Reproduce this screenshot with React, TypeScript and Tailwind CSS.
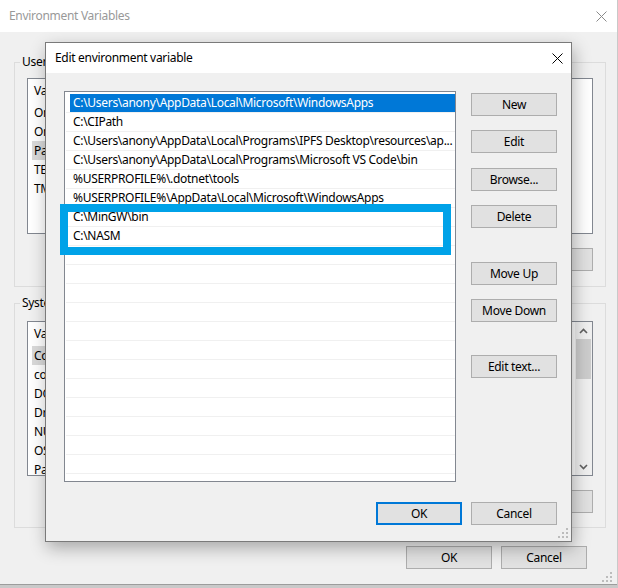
import React from "react";

const font = "font-['Noto_Sans',sans-serif] tracking-[-0.3px]";

function WinButton({ label, primary = false, className = "" }: { label: string; primary?: boolean; className?: string }) {
  return (
    <div
      className={`flex h-[23px] w-[86px] shrink-0 items-center justify-center bg-[#e1e1e1] text-[12px] text-black ${
        primary ? "border-2 border-[#0078d7]" : "border border-[#adadad]"
      } ${className}`}
    >
      {label}
    </div>
  );
}

function CloseIcon({ color }: { color: string }) {
  return (
    <svg width="11" height="11" viewBox="0 0 11 11">
      <path d="M0.5 0.5L10.5 10.5M10.5 0.5L0.5 10.5" stroke={color} strokeWidth="1" />
    </svg>
  );
}

function Grip() {
  return (
    <svg width="10" height="10" viewBox="0 0 10 10" fill="#bcbcbc">
      <rect x="8" y="0" width="2" height="2" />
      <rect x="4" y="4" width="2" height="2" />
      <rect x="8" y="4" width="2" height="2" />
      <rect x="0" y="8" width="2" height="2" />
      <rect x="4" y="8" width="2" height="2" />
      <rect x="8" y="8" width="2" height="2" />
    </svg>
  );
}

function Chevron({ up }: { up: boolean }) {
  return (
    <svg width="9" height="6" viewBox="0 0 9 6">
      <path d={up ? "M1 5L4.5 1.5L8 5" : "M1 1L4.5 4.5L8 1"} stroke="#606060" strokeWidth="1.6" fill="none" />
    </svg>
  );
}

const userVars = [
  { name: "OneDrive" },
  { name: "OneDriveConsumer" },
  { name: "Path", selected: true },
  { name: "TEMP" },
  { name: "TMP" },
];

const systemVars = [
  { name: "ComSpec", selected: true },
  { name: "configsetroot" },
  { name: "DOTNET_CLI_TELEMETRY_OPTOUT" },
  { name: "DriverData" },
  { name: "NUMBER_OF_PROCESSORS" },
  { name: "OS" },
  { name: "Path" },
];

const paths = [
  "C:\\Users\\anony\\AppData\\Local\\Microsoft\\WindowsApps",
  "C:\\CIPath",
  "C:\\Users\\anony\\AppData\\Local\\Programs\\IPFS Desktop\\resources\\ap...",
  "C:\\Users\\anony\\AppData\\Local\\Programs\\Microsoft VS Code\\bin",
  "%USERPROFILE%\\.dotnet\\tools",
  "%USERPROFILE%\\AppData\\Local\\Microsoft\\WindowsApps",
  "C:\\MinGW\\bin",
  "C:\\NASM",
];

function VarList({ rows, height, scroll }: { rows: { name: string; selected?: boolean }[]; height: string; scroll?: boolean }) {
  return (
    <div className={`flex w-[566px] overflow-hidden border border-[#828790] bg-white ${height}`}>
      <div className="flex-1 overflow-hidden">
        <div className="flex h-[24px] items-center text-[12px]">
          <div className="w-[180px] pl-[6px]">Variable</div>
        </div>
        {rows.map((r) => (
          <div key={r.name} className={`mx-[4px] flex h-[19px] w-[200px] items-center whitespace-nowrap text-[12px] ${r.selected ? "bg-[#d9d9d9]" : ""}`}>
            <div className="overflow-hidden pl-[2px]">{r.name}</div>
          </div>
        ))}
      </div>
      {scroll && (
        <div className="flex w-[17px] flex-col bg-[#f0f0f0]">
          <div className="flex h-[17px] items-center justify-center">
            <Chevron up />
          </div>
          <div className="mx-[1px] h-[40px] bg-[#cdcdcd]" />
          <div className="flex-1" />
          <div className="flex h-[17px] items-center justify-center">
            <Chevron up={false} />
          </div>
        </div>
      )}
    </div>
  );
}

export default function App() {
  return (
    <div className={`relative h-[588px] w-[618px] overflow-hidden bg-[#c9c9c9] text-black ${font}`}>
      {/* Environment Variables window (inactive, behind the dialog) */}
      <div className="relative flex h-[585px] w-[617px] flex-col border-b border-[#9c9c9c] bg-[#f0f0f0]">
        <div className="flex h-[32px] items-center justify-between bg-white pl-[9px] pr-[10px]">
          <span className="text-[12px] text-[#999]">Environment Variables</span>
          <CloseIcon color="#8a8a8a" />
        </div>

        <fieldset className="ml-[14px] mt-[22px] w-[591px] border border-[#dcdcdc]">
          <legend className="ml-[5px] px-[2px] text-[12px] leading-[16px]">User variables for anony</legend>
          <div className="px-[12px] pb-[15px] pt-[8px]">
            <VarList rows={userVars} height="h-[156px]" />
            <div className="mt-[14px] flex justify-end gap-[9px]">
              <WinButton label="New..." />
              <WinButton label="Edit..." />
              <WinButton label="Delete" />
            </div>
          </div>
        </fieldset>

        <fieldset className="ml-[14px] mt-[8px] w-[591px] border border-[#dcdcdc]">
          <legend className="ml-[5px] px-[2px] text-[12px] leading-[16px]">System variables</legend>
          <div className="px-[12px] pb-[14px] pt-[10px]">
            <VarList rows={systemVars} height="h-[155px]" scroll />
            <div className="mt-[14px] flex justify-end gap-[9px]">
              <WinButton label="New..." />
              <WinButton label="Edit..." />
              <WinButton label="Delete" />
            </div>
          </div>
        </fieldset>

        <div className="mt-[18px] flex justify-end gap-[9px] pr-[30px]">
          <WinButton label="OK" />
          <WinButton label="Cancel" />
        </div>

        <div className="absolute bottom-[2px] right-[5px]">
          <Grip />
        </div>
      </div>

      {/* Edit environment variable dialog */}
      <div className="absolute left-[45px] top-[42px] flex h-[500px] w-[527px] flex-col border border-[#7a7a7a] bg-[#f0f0f0] shadow-[2px_6px_16px_rgba(0,0,0,0.3)]">
        <div className="flex h-[30px] items-center justify-between bg-white pl-[9px] pr-[8px]">
          <span className="text-[12px]">Edit environment variable</span>
          <CloseIcon color="#000" />
        </div>

        <div className="pl-[18px] pr-[14px] pt-[18px]">
          <div className="flex">
            <div className="h-[391px] w-[392px] overflow-hidden border border-[#828790] bg-white pt-[2px]">
              {Array.from({ length: 20 }).map((_, i) => (
                <div key={i} className="ml-[1px] flex h-[19px] border-b border-[#f0f0f0]">
                  {i < paths.length && (
                    <div
                      className={`ml-[4px] flex flex-1 items-center overflow-hidden whitespace-nowrap pl-[3px] text-[12px] ${
                        i === 0 ? "bg-[#0078d7] text-white" : ""
                      }`}
                    >
                      {paths[i]}
                    </div>
                  )}
                </div>
              ))}
            </div>

            <div className="ml-[15px] flex flex-col pt-[2px]">
              <WinButton label="New" />
              <WinButton label="Edit" className="mt-[14px]" />
              <WinButton label="Browse..." className="mt-[15px]" />
              <WinButton label="Delete" className="mt-[14px]" />
              <WinButton label="Move Up" className="mt-[34px]" />
              <WinButton label="Move Down" className="mt-[14px]" />
              <WinButton label="Edit text..." className="mt-[33px]" />
            </div>
          </div>

          <div className="mt-[20px] flex justify-end gap-[9px]">
            <WinButton label="OK" primary />
            <WinButton label="Cancel" />
          </div>
        </div>

        {/* highlight drawn over the list */}
        <div className="absolute left-[14px] top-[161px] h-[51px] w-[391px] border-[8px] border-[#00a2e8]" />

        <div className="absolute bottom-[3px] right-[3px]">
          <Grip />
        </div>
      </div>
    </div>
  );
}
